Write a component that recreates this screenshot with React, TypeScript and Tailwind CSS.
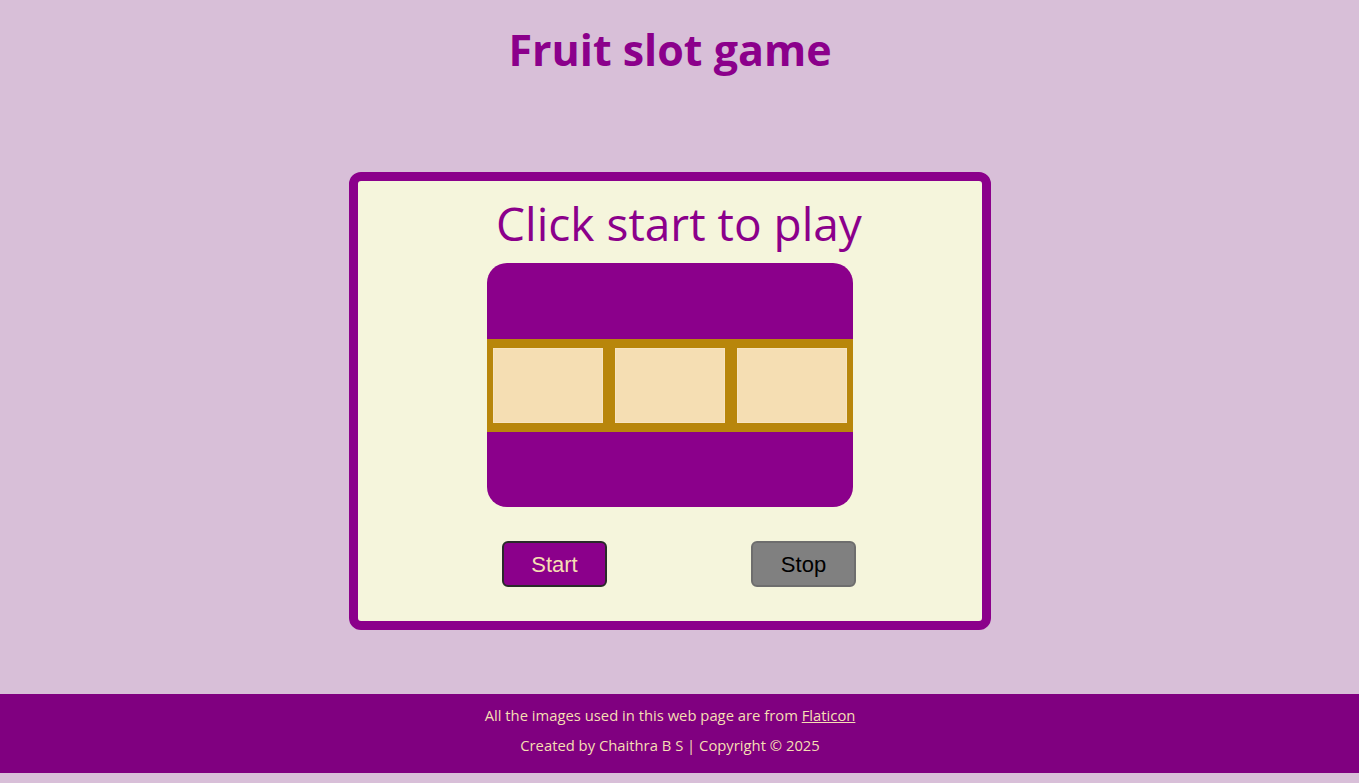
export default function App() {
  const comic = { fontFamily: '"Comic Sans MS", "Open Sans", sans-serif' };
  const arial = { fontFamily: '"Liberation Sans", Arial, sans-serif' };

  return (
    <div className="min-h-[783px] bg-[#d8bfd8] flex flex-col" style={comic}>
      <div className="pr-[19px] flex flex-col">
        <h1 className="mt-[22px] text-center text-[43px] leading-[56px] font-bold text-[#8b008b]">
          Fruit slot game
        </h1>

        <div className="mx-auto mt-[94px] w-[642px] h-[458px] rounded-[12px] border-[9px] border-[#8b008b] bg-[#f5f5dc] flex flex-col items-center">
          <p className="mt-[10px] ml-[18px] text-[46px] leading-[64px] text-[#8b008b]">Click start to play</p>

          {/* slot machine */}
          <div className="mt-[8px] w-[366px] h-[244px] rounded-[20px] bg-[#8b008b] flex flex-col justify-center">
            <div className="bg-[#b8860b] px-[6px] py-[9px] grid grid-cols-3 gap-[12px]">
              {[0, 1, 2].map((i) => (
                <div key={i} className="h-[75px] bg-[#f5deb3] border border-[#f7e4c0]" />
              ))}
            </div>
          </div>

          <div className="mt-[34px] w-[354px] ml-[18px] flex justify-between">
            <button
              className="w-[105px] h-[46px] rounded-[6px] bg-[#8b008b] border-2 border-[#2a2a2a] text-[#f5deb3] text-[22px]"
              style={arial}
            >
              Start
            </button>
            <button
              className="w-[105px] h-[46px] rounded-[6px] bg-[#808080] border-2 border-[#6e6e6e] text-black text-[22px]"
              style={arial}
            >
              Stop
            </button>
          </div>
        </div>
      </div>

      <footer className="mt-[64px] mb-[10px] h-[79px] pr-[19px] pb-[8px] bg-[#800080] text-[#f5deb3] text-[14.8px] flex flex-col items-center justify-center gap-[8px]">
        <p className="leading-[22px]">
          All the images used in this web page are from{' '}
          <a href="#" className="underline text-[#f5deb3]">Flaticon</a>
        </p>
        <p className="leading-[22px]">Created by Chaithra B S | Copyright © 2025</p>
      </footer>
    </div>
  );
}
